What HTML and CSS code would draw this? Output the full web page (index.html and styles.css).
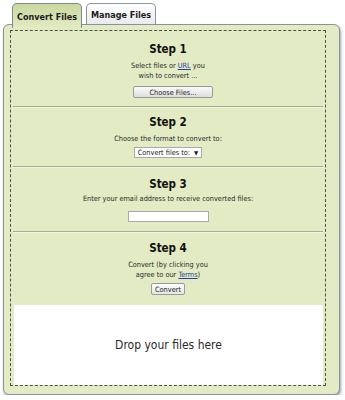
FILE: index.html
```html
<!DOCTYPE html>
<html>
<head>
<meta charset="utf-8">
<link rel="stylesheet" href="styles.css">
</head>
<body>
<div class="tabs">
  <div class="tab active">Convert Files</div>
  <div class="tab">Manage Files</div>
</div>
<div class="panel">
  <div class="dropbox">
    <div class="step step1">
      <h2>Step 1</h2>
      <p>Select files or <a href="#">URL</a> you<br>wish to convert ...</p>
      <div class="ctrl"><span class="btn choose">Choose Files...</span></div>
    </div>
    <div class="step step2">
      <h2>Step 2</h2>
      <p>Choose the format to convert to:</p>
      <div class="ctrl"><span class="select">Convert files to: <span class="arrow">▼</span></span></div>
    </div>
    <div class="step step3">
      <h2>Step 3</h2>
      <p>Enter your email address to receive converted files:</p>
      <div class="ctrl"><span class="input"></span></div>
    </div>
    <div class="step step4">
      <h2>Step 4</h2>
      <p>Convert (by clicking you<br>agree to our <a href="#">Terms</a>)</p>
      <div class="ctrl"><span class="btn convert">Convert</span></div>
    </div>
    <div class="drop">Drop your files here</div>
  </div>
</div>
</body>
</html>
```
FILE: styles.css
```css
html, body {
  margin: 0;
  padding: 0;
  background: #ffffff;
  font-family: "DejaVu Sans Condensed", "DejaVu Sans", sans-serif;
  color: #222;
}
.tabs {
  display: flex;
  gap: 4px;
  padding: 3px 0 0 12px;
  height: 22px;
  position: relative;
  z-index: 2;
}
.tab {
  width: 70px;
  height: 21px;
  border: 1px solid #8c96a0;
  border-bottom: none;
  border-radius: 5px 5px 0 0;
  background: linear-gradient(#ffffff, #e8eaee);
  font-size: 9px;
  font-weight: bold;
  display: flex;
  align-items: center;
  justify-content: center;
  color: #1c1c1c;
  box-sizing: border-box;
  padding-top: 1px;
}
.tab.active {
  height: 25px;
  background: linear-gradient(#c9d89e, #e2ebc3);
  border-color: #7f8a92;
}
.panel {
  margin: -1px 5px 0 3px;
  border: 1px solid #87929c;
  border-radius: 6px;
  background: #e2ebc3;
  box-shadow: 1px 2px 3px rgba(40, 50, 60, 0.45);
  padding: 5px 13px 8px 6px;
  position: relative;
  z-index: 1;
}
.dropbox {
  border: 1px dashed #4f5248;
  padding: 0 2px 0 2px;
}
.step {
  text-align: center;
  border-bottom: 1px solid #a7ad8c;
  box-shadow: 0 1px 0 #f1f5df;
}
.step h2 {
  margin: 0;
  font-size: 11.5px;
  line-height: 14px;
  font-weight: bold;
  font-family: "DejaVu Sans Condensed", "DejaVu Sans", sans-serif;
  color: #111;
}
.step p {
  margin: 0;
  font-size: 7.3px;
  line-height: 10px;
  color: #2a2a2a;
}
.step a {
  color: #2a3d9a;
  text-decoration: underline;
}
.ctrl {
  display: flex;
  justify-content: center;
}
.step1 { padding: 11px 0 8px; }
.step1 p { margin-top: 5px; }
.step1 .ctrl { margin-top: 5px; }
.step2 { padding: 8px 0 8px; }
.step2 p { margin-top: 5px; }
.step2 .ctrl { margin-top: 3px; }
.step3 { padding: 10px 0 9px; }
.step3 p { margin-top: 3px; }
.step3 .ctrl { margin-top: 7px; }
.step4 { padding: 9px 0 8px; border-bottom: none; box-shadow: none; }
.step4 p { margin-top: 5px; }
.step4 .ctrl { margin-top: 3px; }
.btn {
  display: flex;
  align-items: center;
  justify-content: center;
  height: 12px;
  box-sizing: border-box;
  border: 1px solid #9a9a9a;
  border-radius: 2px;
  background: linear-gradient(#fafafa, #dedede);
  font-size: 7.3px;
  color: #222;
}
.btn.choose { width: 80px; margin-left: 10px; }
.btn.convert { width: 34px; background: linear-gradient(#ffffff, #e6e6e6); }
.select {
  display: flex;
  align-items: center;
  height: 11px;
  box-sizing: border-box;
  border: 1px solid #a9a9a9;
  background: #ffffff;
  font-size: 7.3px;
  padding: 0 3px 0 3px;
  color: #222;
}
.select .arrow { font-size: 6px; margin-left: 4px; }
.input {
  display: block;
  width: 81px;
  height: 11px;
  box-sizing: border-box;
  border: 1px solid #a9a9a9;
  background: #ffffff;
}
.drop {
  background: #ffffff;
  height: 80px;
  margin: 2px 0 0 1px;
  display: flex;
  align-items: center;
  justify-content: center;
  font-size: 12px;
  color: #2a2a2a;
  font-family: "DejaVu Sans Condensed", "DejaVu Sans", sans-serif;
}
```
